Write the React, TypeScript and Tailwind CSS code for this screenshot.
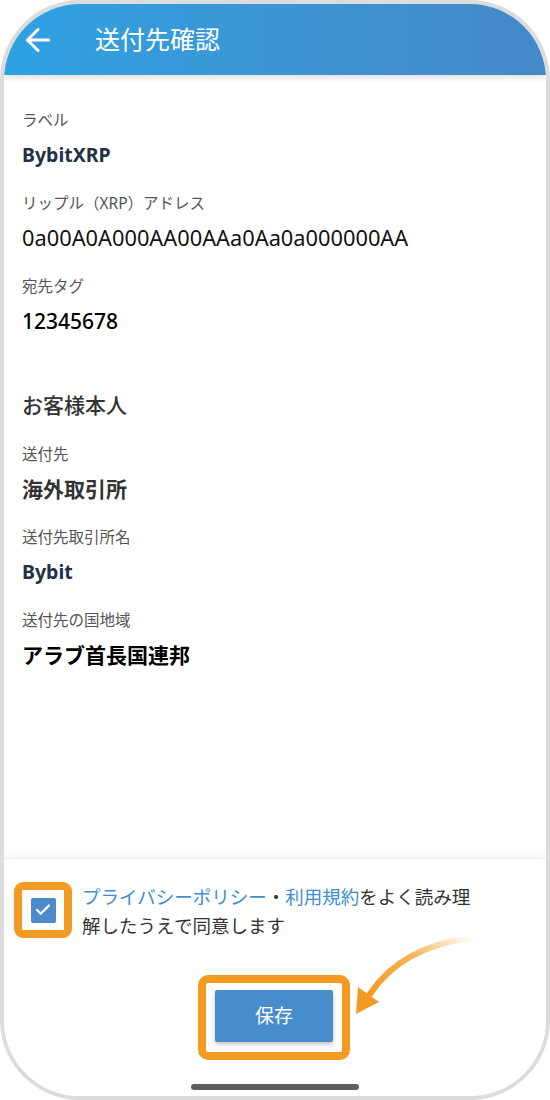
import { ArrowLeft, Check } from "lucide-react";

type Row = {
  label: string;
  value: string;
  valueClass: string;
};

const accountRows: Row[] = [
  { label: "ラベル", value: "BybitXRP", valueClass: "text-[19.5px] font-bold text-[#243044]" },
  { label: "リップル（XRP）アドレス", value: "0a00A0A000AA00AAa0Aa0a000000AA", valueClass: "text-[21.8px] font-normal text-[#111]" },
  { label: "宛先タグ", value: "12345678", valueClass: "text-[21px] font-medium text-black" },
];

const ownerRows: Row[] = [
  { label: "送付先", value: "海外取引所", valueClass: "text-[21px] font-bold text-[#333]" },
  { label: "送付先取引所名", value: "Bybit", valueClass: "text-[19.5px] font-bold text-[#243044]" },
  { label: "送付先の国地域", value: "アラブ首長国連邦", valueClass: "text-[21px] font-bold text-black" },
];

function InfoRow({ row, last }: { row: Row; last?: boolean }) {
  return (
    <div className={last ? "" : "mb-[24px]"}>
      <p className="text-[15.5px] leading-[22px] text-[#555]">{row.label}</p>
      <p className={`mt-[11px] leading-[26px] ${row.valueClass}`}>{row.value}</p>
    </div>
  );
}

function CurvedArrow() {
  return (
    <svg
      className="pointer-events-none absolute left-[340px] top-[930px]"
      width="140"
      height="95"
      viewBox="0 0 140 95"
    >
      <defs>
        <linearGradient id="tail" x1="1" y1="0" x2="0" y2="1">
          <stop offset="0" stopColor="#f39a22" stopOpacity="0" />
          <stop offset="0.45" stopColor="#f39a22" stopOpacity="0.75" />
          <stop offset="1" stopColor="#f39a22" />
        </linearGradient>
      </defs>
      <path d="M132 8 Q 62 16 30 64" fill="none" stroke="url(#tail)" strokeWidth="6" strokeLinecap="round" />
      <polygon points="16,84 18,57 39,72" fill="#f39a22" />
    </svg>
  );
}

export default function App() {
  return (
    <div
      className="relative h-[1100px] w-[550px] bg-white"
      style={{ fontFamily: '"Noto Sans", "Noto Sans CJK JP", sans-serif' }}
    >
      <div className="flex h-full w-full flex-col overflow-hidden rounded-[80px] border-4 border-[#dcdcdc] bg-white">
        <header className="relative z-10 flex h-[71px] shrink-0 items-center bg-gradient-to-r from-[#2ea2e2] to-[#4488c8] shadow-[0_3px_6px_rgba(0,0,0,0.12)]">
          <ArrowLeft className="ml-[16px] h-[36px] w-[36px] text-white" strokeWidth={2} />
          <h1 className="ml-[39px] text-[25px] font-normal leading-none text-white">送付先確認</h1>
        </header>

        <main className="flex-1 px-[18px] pt-[34px]">
          {accountRows.map((row, i) => (
            <InfoRow key={row.label} row={row} last={i === accountRows.length - 1} />
          ))}
          <h2 className="mt-[58px] text-[21px] font-medium leading-[26px] text-[#333]">お客様本人</h2>
          <div className="mt-[25px]">
            {ownerRows.map((row, i) => (
              <InfoRow key={row.label} row={row} last={i === ownerRows.length - 1} />
            ))}
          </div>
        </main>

        <footer className="flex h-[238px] shrink-0 flex-col border-t border-[#ececec] bg-white shadow-[0_-6px_10px_rgba(0,0,0,0.04)]">
          <div className="mt-[23px] flex items-start pl-[10px]">
            <div className="flex h-[56px] w-[58px] shrink-0 items-center justify-center rounded-[9px] border-[8px] border-[#f39a22] bg-white">
              <span className="flex h-[25px] w-[25px] items-center justify-center rounded-[2px] bg-[#4a8bcb]">
                <Check className="h-[18px] w-[18px] text-white" strokeWidth={3} />
              </span>
            </div>
            <div className="ml-[10px] text-[18.5px] leading-[29px] text-[#333]">
              <div className="flex">
                <span className="text-[#3d8fd1]">プライバシーポリシー</span>
                <span>・</span>
                <span className="text-[#3d8fd1]">利用規約</span>
                <span>をよく読み理</span>
              </div>
              <div>解したうえで同意します</div>
            </div>
          </div>

          <div className="mt-[35px] flex justify-center pr-[2px]">
            <div className="rounded-[10px] border-[8px] border-[#f39a22] bg-white px-[9px] pt-[7px] pb-[10px]">
              <button
                type="button"
                className="flex h-[52px] w-[118px] items-center justify-center rounded-[2px] bg-[#478ccb] text-[19px] text-white shadow-[0_2px_4px_rgba(0,0,0,0.25)]"
              >
                保存
              </button>
            </div>
          </div>

          <div className="mx-auto mt-[24px] h-[6px] w-[168px] rounded-full bg-[#5f5f5f]" />
        </footer>
      </div>
      <CurvedArrow />
    </div>
  );
}
